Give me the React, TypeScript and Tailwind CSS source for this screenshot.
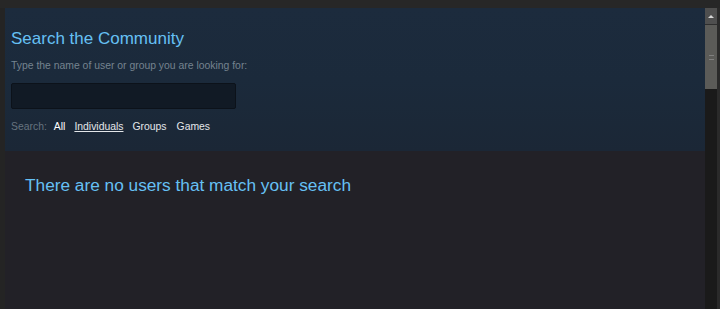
export default function App() {
  return (
    <div className="w-[720px] h-[309px] overflow-hidden bg-[#262626] flex flex-col font-['Liberation_Sans',Arial,sans-serif]">
      <div className="h-[8px] shrink-0 bg-[#272727]" />
      <div className="flex flex-1 min-h-0">
        <div className="w-[5px] shrink-0 bg-[#242424]" />
        <div className="flex-1 flex flex-col bg-[#222127]">
          <div className="h-[143px] shrink-0 bg-gradient-to-b from-[#1c2b3d] via-[#1b2a3b] to-[#1b2736] px-[6px] pt-[21px]">
            <h1 className="text-[17px] leading-[20px] text-[#66c0f4]">Search the Community</h1>
            <p className="mt-[10px] text-[10.4px] leading-[13px] text-[#75838f]">
              Type the name of user or group you are looking for:
            </p>
            <input
              type="text"
              className="mt-[11px] block w-[225px] h-[26px] bg-[#111a25] border border-[#0c121a] rounded-[2px] outline-none"
            />
            <div className="mt-[11px] flex items-center text-[10.4px] leading-[13px]">
              <span className="text-[#66737f]">Search:</span>
              <span className="ml-[7px] text-white">All</span>
              <span className="ml-[9px] text-[#e3e6e9] underline">Individuals</span>
              <span className="ml-[9px] text-[#e3e6e9]">Groups</span>
              <span className="ml-[10px] text-[#e3e6e9]">Games</span>
            </div>
          </div>
          <div className="px-[20px] pt-[24px]">
            <p className="text-[17.25px] leading-[20px] text-[#66c0f4]">There are no users that match your search</p>
          </div>
        </div>
        <div className="w-[12px] shrink-0 flex flex-col bg-[#1a1a1a]">
          <div className="h-[17px] bg-[#4f4f4f] border-b border-[#2e2e2e] flex items-center justify-center">
            <div className="w-0 h-0 border-l-[3px] border-r-[3px] border-b-[3px] border-l-transparent border-r-transparent border-b-[#d8d8d8]" />
          </div>
          <div className="h-[64px] bg-[#5b5b58] flex items-center justify-center">
            <div className="w-[5px] h-[5px] border-y border-[#808080]" />
          </div>
        </div>
        <div className="w-[3px] shrink-0 bg-[#2a2a2a]" />
      </div>
    </div>
  );
}
